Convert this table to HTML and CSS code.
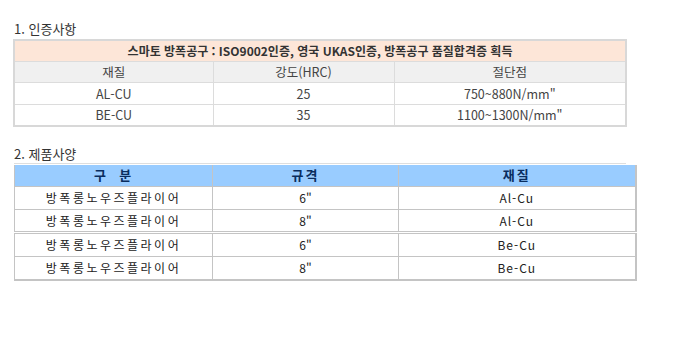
FILE: index.html
```html
<!DOCTYPE html>
<html lang="ko">
<head>
<meta charset="utf-8">
<link rel="stylesheet" href="styles.css">
</head>
<body>
<div class="page">
  <h2 class="title t1">1. 인증사항</h2>
  <table class="cert">
    <colgroup><col class="c1"><col class="c2"><col class="c3"></colgroup>
    <tr class="notice"><td colspan="3">스마토 방폭공구 : ISO9002인증, 영국 UKAS인증, 방폭공구 품질합격증 획득</td></tr>
    <tr class="head"><td>재질</td><td>강도(HRC)</td><td>절단점</td></tr>
    <tr><td>AL-CU</td><td>25</td><td>750~880N/mm"</td></tr>
    <tr><td>BE-CU</td><td>35</td><td>1100~1300N/mm"</td></tr>
  </table>

  <h2 class="title t2">2. 제품사양</h2>
  <div class="spec-wrap">
    <table class="spec">
      <colgroup><col class="s1"><col class="s2"><col class="s3"></colgroup>
      <tr class="head"><td>구&nbsp;&nbsp;분</td><td>규격</td><td>재질</td></tr>
      <tr><td class="name">방폭롱노우즈플라이어</td><td>6"</td><td class="mat">Al-Cu</td></tr>
      <tr><td class="name">방폭롱노우즈플라이어</td><td>8"</td><td class="mat">Al-Cu</td></tr>
      <tr class="split"><td class="name">방폭롱노우즈플라이어</td><td>6"</td><td class="mat">Be-Cu</td></tr>
      <tr><td class="name">방폭롱노우즈플라이어</td><td>8"</td><td class="mat">Be-Cu</td></tr>
    </table>
  </div>
</div>
</body>
</html>
```

FILE: styles.css
```css
* { box-sizing: border-box; }
html, body { margin: 0; padding: 0; background: #fff; }
body {
  font-family: "Noto Sans CJK KR", "Noto Sans", sans-serif;
  color: #333;
}
.page { padding: 20px 0 0 13px; }

.title {
  margin: 0;
  font-size: 13px;
  font-weight: 400;
  line-height: 18px;
  color: #333;
  padding-left: 1px;
}
.t1 { height: 19px; }
.t2 { margin-top: 18px; height: 18px; }

table { border-collapse: collapse; table-layout: fixed; }
td { padding: 0; text-align: center; }

.cert {
  width: 612px;
  border: 2px solid #d8d8d8;
  font-size: 12.5px;
  color: #444;
}
.cert .c1 { width: 199px; }
.cert .c2 { width: 181px; }
.cert .c3 { width: 232px; }
.cert td {
  border: 1px solid #dcdcdc;
  height: 21.5px;
  line-height: 19px;
}
.cert .notice td {
  background: #fde6d8;
  color: #333;
  font-weight: 700;
  font-size: 12px;
  height: 21px;
}
.cert .head td { background: #f0f0f0; }

.spec-wrap {
  width: 612px;
  margin-left: 1px;
  border-top: 1px solid #dedede;
  padding-top: 1px;
}
.spec {
  width: 621px;
  border-left: 1px solid #c4c4c4;
  border-right: 2px solid #c4c4c4;
  border-bottom: 2px solid #c4c4c4;
  font-size: 12px;
  color: #222;
}
.spec .s1 { width: 198px; }
.spec .s2 { width: 186px; }
.spec .s3 { width: 237px; }
.spec td {
  border: 1px solid #c4c4c4;
  height: 23px;
  line-height: 20px;
}
.spec .head td {
  background: #99ccff;
  color: #0a2d5e;
  font-weight: 700;
  font-size: 13px;
  letter-spacing: 2px;
  border-top: none;
  height: 22px;
}
.spec .name { letter-spacing: 2.5px; }
.spec .mat { letter-spacing: 1px; }
.spec .split td { border-top: 3px double #c4c4c4; height: 24px; }
```
